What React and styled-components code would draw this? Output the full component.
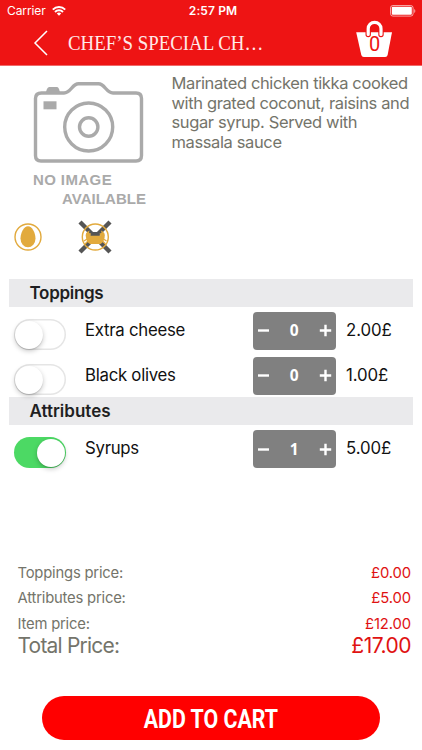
import styled, { createGlobalStyle } from "styled-components";
import { useState } from "react";

const toppingItems = [
  { name: "Extra cheese", price: 2, count: 0 },
  { name: "Black olives", price: 1, count: 0 },
];

const attributeItems = [
  { name: "Syrups", price: 5, count: 1 },
];

const ITEM_PRICE = 12;

function sum(items) {
  return items.reduce((total, item) => total + item.price * item.count, 0);
}

function StatusBar() {
  return (
    <Status>
      <Carrier>
        <span>Carrier</span>
        <svg width="14" height="10" viewBox="0 0 14 10" fill="none" stroke="#fff" strokeWidth="2">
          <path d="M0.8 3.6a8.9 8.9 0 0 1 12.4 0" />
          <path d="M3 6a5.7 5.7 0 0 1 8 0" />
          <path d="M7 9.8L4.8 7.6a3.2 3.2 0 0 1 4.4 0z" fill="#fff" stroke="none" />
        </svg>
      </Carrier>
      <Clock>2:57 PM</Clock>
      <Battery width="26" height="12" viewBox="0 0 26 12">
        <rect x="0.5" y="0.5" width="22.6" height="10.6" rx="2.4" fill="none" stroke="#fff" strokeOpacity="0.6" />
        <rect x="1.8" y="1.8" width="20" height="8" rx="1" fill="#fff" />
        <path d="M24.2 4v4c1.5-.7 1.5-3.3 0-4z" fill="#fff" fillOpacity="0.6" />
      </Battery>
    </Status>
  );
}

function NavBar() {
  return (
    <Nav>
      <BackButton aria-label="Back">
        <svg width="16" height="26" viewBox="0 0 16 26" fill="none" stroke="#fff" strokeWidth="1.5">
          <path d="M14 1L2 13L14 25" />
        </svg>
      </BackButton>
      <Title><span>CHEF’S SPECIAL CH…</span></Title>
      <BasketButton aria-label="Basket">
        <svg width="38" height="38" viewBox="0 0 38 38">
          <path d="M1.2 12.2H37L32.6 35Q32.2 37 30.2 37H8.8Q6.8 37 6.3 35Z" fill="#fff" />
          <path d="M13.2 14.5V8.7a6.4 6.4 0 0 1 12.8 0V14.5" fill="none" stroke="#ee1414" strokeWidth="5.4" strokeLinecap="round" />
          <path d="M13.2 14.5V8.7a6.4 6.4 0 0 1 12.8 0V14.5" fill="none" stroke="#fff" strokeWidth="3.2" strokeLinecap="round" />
        </svg>
        <BasketCount>0</BasketCount>
      </BasketButton>
    </Nav>
  );
}

function NoImage() {
  return (
    <Placeholder>
      <svg width="112" height="84" viewBox="0 0 112 84" fill="none" stroke="#aaaaaa" strokeWidth="3.4">
        <path d="M8.5 13H31C38 13 39 3.8 45.5 3.8H65.5C72 3.8 73 13 80 13H103Q108.5 13 108.5 18.5V75.5Q108.5 81 103 81H8Q2.5 81 2.5 75.5V18.5Q2.5 13 8.5 13Z" />
        <circle cx="55.7" cy="47" r="24" />
        <circle cx="55.7" cy="47" r="9.2" />
        <path d="M13 12C14 8 15 7 17 7H23C26 7 26 9 27 12Z" fill="#aaaaaa" stroke="none" />
        <rect x="10.5" y="21.3" width="13" height="8" fill="#aaaaaa" stroke="none" />
      </svg>
      <PlaceholderText>NO IMAGE</PlaceholderText>
      <PlaceholderText $indent>AVAILABLE</PlaceholderText>
    </Placeholder>
  );
}

function EggIcon() {
  return (
    <svg width="28" height="28" viewBox="0 0 28 28">
      <circle cx="14" cy="14" r="13" fill="none" stroke="#e2aa3d" strokeWidth="1.4" />
      <path d="M14 3.2C18 3.2 21.5 9.5 21.5 15.6A7.5 8.6 0 0 1 6.5 15.6C6.5 9.5 10 3.2 14 3.2Z" fill="#e2aa3d" />
    </svg>
  );
}

function NoCrabIcon() {
  return (
    <svg width="34" height="34" viewBox="0 0 34 34">
      <path d="M2 2L32 32M32 2L2 32" stroke="#555555" strokeWidth="4.4" />
      <path d="M12.5 12H21.5V17H12.5Z" fill="#555555" />
      <circle cx="17.3" cy="17" r="13" fill="none" stroke="#e2aa3d" strokeWidth="1.4" />
      <g fill="#e2aa3d" stroke="#e2aa3d">
        <path d="M8 17Q12.5 15.5 13.5 15.8H20.5Q22 15.5 26.5 17Q26.5 21.5 22.5 24H12Q8 21.5 8 17Z" stroke="none" />
        <path d="M9 19L6 21M25.5 19L28.5 21M10 21L7 24M24.5 21L27.5 24" fill="none" strokeWidth="1.3" />
        <path d="M8 17.5Q6.5 12.5 11.5 10.5L11 13L13 13.5L12 17ZM26.5 17.5Q28 12.5 23 10.5L23.5 13L21.5 13.5L22.5 17Z" stroke="none" />
      </g>
    </svg>
  );
}

function OptionRow({ item, onChange }) {
  const on = item.count > 0;
  return (
    <Row>
      <Switch role="switch" aria-checked={on} aria-label={item.name} $on={on} onClick={() => onChange(on ? 0 : 1)}>
        <Knob $on={on} />
      </Switch>
      <OptionName>{item.name}</OptionName>
      <Stepper>
        <StepButton aria-label="Less" onClick={() => onChange(Math.max(0, item.count - 1))}>
          <svg width="13" height="13" viewBox="0 0 13 13" stroke="#fff" strokeWidth="2.4">
            <path d="M1 6.5H12" />
          </svg>
        </StepButton>
        <Count>{item.count}</Count>
        <StepButton aria-label="More" onClick={() => onChange(item.count + 1)}>
          <svg width="13" height="13" viewBox="0 0 13 13" stroke="#fff" strokeWidth="2.4">
            <path d="M0.8 6.5H12.2M6.5 0.8V12.2" />
          </svg>
        </StepButton>
      </Stepper>
      <OptionPrice>{item.price.toFixed(2)}£</OptionPrice>
    </Row>
  );
}

function App() {
  const [toppings, setToppings] = useState(toppingItems);
  const [attributes, setAttributes] = useState(attributeItems);

  const update = (setItems) => (index, count) => {
    setItems((items) => items.map((item, i) => (i === index ? { ...item, count } : item)));
  };

  const toppingsPrice = sum(toppings);
  const attributesPrice = sum(attributes);

  return (
    <>
      <GlobalStyle />
      <Screen>
        <Header>
          <StatusBar />
          <NavBar />
        </Header>
        <Product>
          <NoImage />
          <Description>
            Marinated chicken tikka cooked with grated coconut, raisins and sugar syrup. Served with massala sauce
          </Description>
        </Product>
        <Allergens>
          <EggIcon />
          <NoCrabIcon />
        </Allergens>
        <Options>
          <SectionTitle>Toppings</SectionTitle>
          {toppings.map((item, i) => (
            <OptionRow key={item.name} item={item} onChange={(count) => update(setToppings)(i, count)} />
          ))}
          <SectionTitle $wide>Attributes</SectionTitle>
          {attributes.map((item, i) => (
            <OptionRow key={item.name} item={item} onChange={(count) => update(setAttributes)(i, count)} />
          ))}
        </Options>
        <Summary>
          <PriceLine><span>Toppings price:</span><Amount>£{toppingsPrice.toFixed(2)}</Amount></PriceLine>
          <PriceLine><span>Attributes price:</span><Amount>£{attributesPrice.toFixed(2)}</Amount></PriceLine>
          <PriceLine><span>Item price:</span><Amount>£{ITEM_PRICE.toFixed(2)}</Amount></PriceLine>
          <PriceLine $total>
            <span>Total Price:</span>
            <Amount $total>£{(toppingsPrice + attributesPrice + ITEM_PRICE).toFixed(2)}</Amount>
          </PriceLine>
        </Summary>
        <AddButton><AddLabel>ADD TO CART</AddLabel></AddButton>
      </Screen>
    </>
  );
}

const GlobalStyle = createGlobalStyle`
  * {
    box-sizing: border-box;
  }
  body {
    margin: 0;
    background: #fff;
    font-family: Inter, "Liberation Sans", sans-serif;
  }
  button {
    border: 0;
    padding: 0;
    background: none;
    color: inherit;
    font: inherit;
    cursor: pointer;
  }
  svg {
    display: block;
    flex: none;
  }
`

const Screen = styled.main`
  display: flex;
  flex-direction: column;
  width: 422px;
  height: 750px;
  overflow: hidden;
  background: #fff;
`

const Header = styled.header`
  height: 66px;
  background: #ee1414;
  border-bottom: 1px solid #f06a6a;
  color: #fff;
`

const Status = styled.div`
  display: grid;
  grid-template-columns: 1fr auto 1fr;
  align-items: center;
  height: 21px;
  padding: 0 6px 0 7px;
`

const Carrier = styled.div`
  display: flex;
  align-items: center;
  gap: 6px;
  font-size: 12px;
  letter-spacing: -0.1px;
`

const Clock = styled.span`
  padding-left: 3px;
  font-size: 12px;
  font-weight: 600;
  letter-spacing: 0.1px;
`

const Battery = styled.svg`
  justify-self: end;
`

const Nav = styled.nav`
  display: flex;
  height: 44px;
`

const BackButton = styled.button`
  width: 68px;
  padding: 9px 0 0 33px;
  display: flex;
`

const Title = styled.h1`
  flex: 1;
  margin: 0;
  padding-top: 9px;
  color: #ffe9e9;
  font: 400 20.5px/26px "Liberation Serif", serif;
  white-space: nowrap;
  span {
    display: inline-block;
    transform: scaleX(0.92);
    transform-origin: left;
  }
`

const BasketButton = styled.button`
  display: grid;
  align-self: flex-start;
  justify-items: center;
  width: 38px;
  height: 38px;
  margin: -1px 29px 0 0;
  > * {
    grid-area: 1 / 1;
  }
`

const BasketCount = styled.span`
  padding: 13px 0 0 1px;
  color: #ee1414;
  font: 400 20px/22px Roboto, sans-serif;
`

const Product = styled.section`
  display: flex;
  height: 153px;
`

const Placeholder = styled.div`
  width: 171.5px;
  padding: 14px 0 0 33px;
`

const PlaceholderText = styled.div`
  margin: ${p => p.$indent ? "0 0 0 29px" : "6px 0 0 0"};
  color: #aaaaaa;
  font: 700 15px/19px "Liberation Sans", sans-serif;
  letter-spacing: ${p => p.$indent ? "0.05px" : "0.4px"};
`

const Description = styled.p`
  width: 246px;
  margin: 0;
  padding-top: 8px;
  color: #74746a;
  font-size: 16.5px;
  letter-spacing: -0.38px;
  line-height: 19.6px;
`

const Allergens = styled.div`
  display: flex;
  align-items: center;
  gap: 36px;
  height: 36px;
  padding-left: 14px;
`

const Options = styled.section`
  margin: 23.5px 9px 0;
`

const SectionTitle = styled.h2`
  margin: 0;
  height: 28px;
  padding-left: 20.5px;
  background: #eaeaec;
  color: #1f1f22;
  font-size: 17px;
  font-weight: 600;
  letter-spacing: ${p => p.$wide ? "0" : "-0.3px"};
  line-height: 29px;
`

const Row = styled.div`
  display: flex;
  align-items: flex-start;
  height: 45.2px;
  padding: 5.5px 0 0 5px;
`

const Switch = styled.button`
  width: 52px;
  height: 31px;
  margin-top: 7px;
  padding: 1.5px;
  border-radius: 16px;
  background: ${p => p.$on ? "#4cd964" : "#fff"};
  box-shadow: ${p => p.$on ? "none" : "inset 0 0 0 1.5px #e5e5e5"};
`

const Knob = styled.span`
  display: block;
  width: 28px;
  height: 28px;
  margin-left: ${p => p.$on ? "21px" : "-1px"};
  border-radius: 50%;
  background: #fff;
  box-shadow: 0 2px 5px rgba(0, 0, 0, 0.22), 0 1px 1px rgba(0, 0, 0, 0.12);
`

const OptionName = styled.span`
  width: 168px;
  padding-left: 19px;
  color: #111;
  font-size: 16.8px;
  letter-spacing: -0.27px;
  line-height: 37px;
`

const Stepper = styled.div`
  display: flex;
  align-items: center;
  justify-content: space-between;
  margin-left: 19px;
  width: 82.5px;
  height: 37.5px;
  padding: 0 4px;
  border-radius: 4px;
  background: #808080;
  color: #fff;
`

const StepButton = styled.button`
  display: flex;
`

const Count = styled.span`
  padding-bottom: 1px;
  font: 700 15.5px/20px "Open Sans", sans-serif;
`

const OptionPrice = styled.span`
  padding-left: 10.5px;
  color: #111;
  font-size: 16.8px;
  letter-spacing: -0.1px;
  line-height: 37px;
`

const Summary = styled.section`
  margin-top: auto;
  padding: 0 11px 0 17.5px;
`

const PriceLine = styled.div`
  display: flex;
  justify-content: space-between;
  color: #74746a;
  font-size: ${p => p.$total ? "21px" : "14.8px"};
  letter-spacing: ${p => p.$total ? "-0.8px" : "-0.2px"};
  line-height: ${p => p.$total ? "26px" : "25.7px"};
  margin-top: ${p => p.$total ? "-4.8px" : "0"};
`

const Amount = styled.span`
  color: #e01212;
  letter-spacing: ${p => p.$total ? "-0.5px" : "-0.1px"};
`

const AddButton = styled.button`
  flex: none;
  width: 337.5px;
  height: 44px;
  margin: 37px 0 10px 42px;
  border-radius: 22px;
  background: #ff0000;
  color: #fff;
`

// squeezed horizontally to get the condensed face
const AddLabel = styled.span`
  display: inline-block;
  transform: scaleX(0.82);
  font: 700 26px/46px Roboto, sans-serif;
  white-space: nowrap;
`

export default App
